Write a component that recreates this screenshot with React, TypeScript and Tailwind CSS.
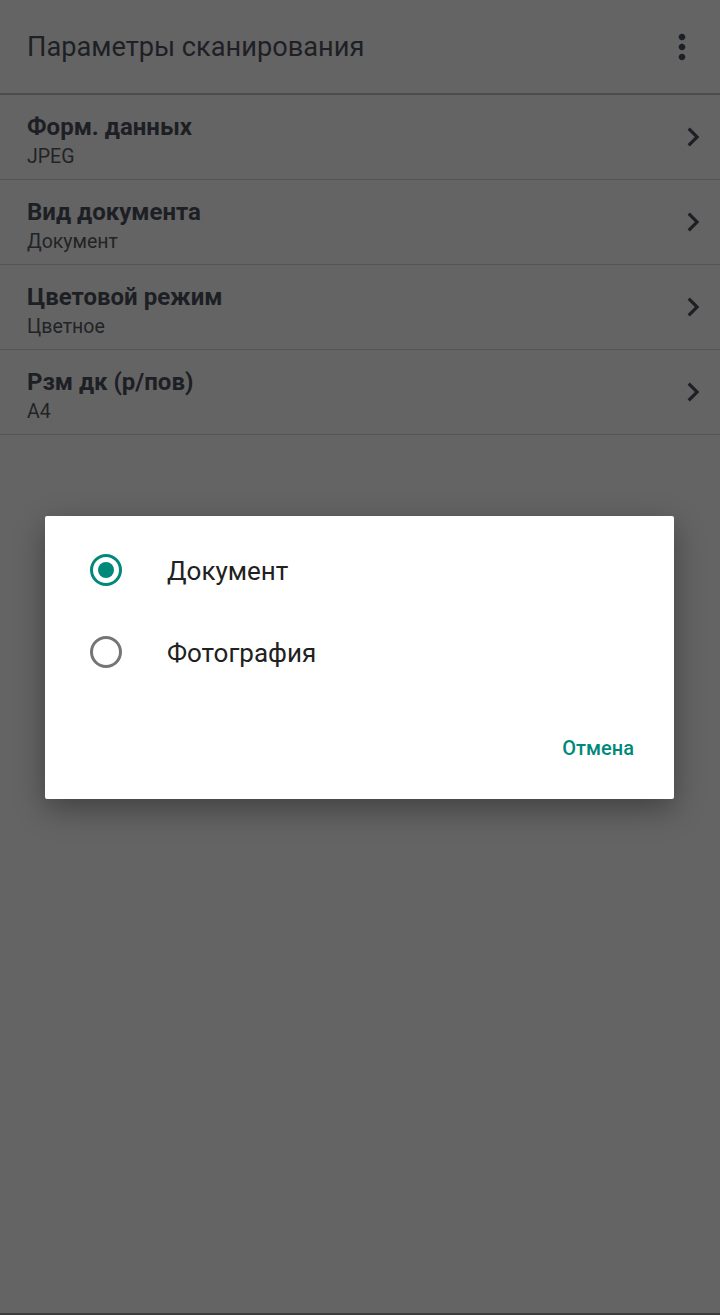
import React, { useState } from "react";

const rows = [
  { title: "Форм. данных", value: "JPEG" },
  { title: "Вид документа", value: "Документ" },
  { title: "Цветовой режим", value: "Цветное" },
  { title: "Рзм дк (р/пов)", value: "A4" },
];

const options = ["Документ", "Фотография"];

function ChevronRight() {
  return (
    <svg viewBox="0 0 24 24" className="w-[38px] h-[38px]" fill="#1d1f24">
      <path d="M10 6L8.59 7.41 13.17 12l-4.58 4.59L10 18l6-6z" />
    </svg>
  );
}

function MoreVert() {
  return (
    <svg viewBox="0 0 24 24" className="w-[40px] h-[40px]" fill="#1d1f26">
      <path d="M12 8c1.1 0 2-.9 2-2s-.9-2-2-2-2 .9-2 2 .9 2 2 2zm0 2c-1.1 0-2 .9-2 2s.9 2 2 2 2-.9 2-2-.9-2-2-2zm0 6c-1.1 0-2 .9-2 2s.9 2 2 2 2-.9 2-2-.9-2-2-2z" />
    </svg>
  );
}

function Radio({ checked }: { checked: boolean }) {
  return (
    <div
      className={`w-[32px] h-[32px] rounded-full border-[3px] flex items-center justify-center ${
        checked ? "border-[#00897b]" : "border-[#757575]"
      }`}
    >
      {checked && <div className="w-[16px] h-[16px] rounded-full bg-[#00897b]" />}
    </div>
  );
}

export default function App() {
  const [selected, setSelected] = useState(0);

  return (
    <div
      className="relative w-[720px] h-[1315px] bg-[#646464] overflow-hidden"
      style={{ fontFamily: "Roboto, 'Noto Sans', sans-serif" }}
    >
      {/* toolbar */}
      <div className="h-[95px] flex items-center justify-between pl-[27px] pr-[18px] border-b-2 border-[#4c4c4c]">
        <h1 className="text-[27.2px] text-[#1e2024] mt-[1px]">Параметры сканирования</h1>
        <MoreVert />
      </div>

      {/* settings list */}
      <div>
        {rows.map((row) => (
          <div
            key={row.title}
            className="h-[85px] flex items-center justify-between pl-[27px] pr-[8px] border-b border-[#545454]"
          >
            <div className="flex flex-col mt-[7px]">
              <span className="text-[24px] font-bold text-[#1d1f24] leading-[28px]">{row.title}</span>
              <span className="text-[19.5px] text-[#222325] leading-[24px] mt-[4px]">{row.value}</span>
            </div>
            <ChevronRight />
          </div>
        ))}
      </div>

      {/* dialog */}
      <div className="absolute left-[45px] top-[516px] w-[629px] h-[283px] bg-white rounded-[2px] shadow-[0_10px_30px_rgba(0,0,0,0.35)] pt-[13px]">
        {options.map((opt, i) => (
          <div
            key={opt}
            onClick={() => setSelected(i)}
            className="h-[82px] flex items-center pl-[45px] cursor-pointer"
          >
            <Radio checked={selected === i} />
            <span className="ml-[45px] text-[26px] text-[#212121] mt-[2px]">{opt}</span>
          </div>
        ))}
        <div className="h-[106px] flex items-center justify-end pr-[40px] pt-[4px]">
          <button className="text-[20px] font-medium text-[#00897b]">Отмена</button>
        </div>
      </div>

      <div className="absolute left-0 right-0 bottom-0 h-[2px] bg-[#3c3c3c]" />
    </div>
  );
}
